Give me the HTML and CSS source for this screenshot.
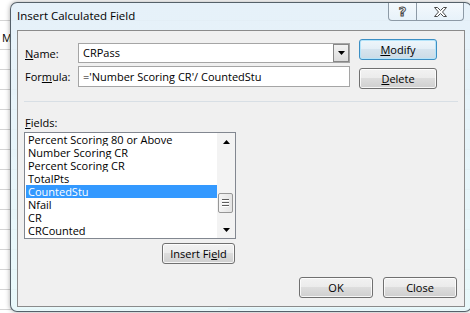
FILE: index.html
```html
<!DOCTYPE html>
<html>
<head>
<meta charset="utf-8">
<title>Insert Calculated Field</title>
<link rel="stylesheet" href="styles.css">
</head>
<body>
<div class="sheet">
  <div class="cell-m">M</div>
  <div class="sheet-blue"></div>
</div>
<div class="window">
  <div class="titlebar">
    <span class="title">Insert Calculated Field</span>
    <div class="caption-btns">
      <div class="cap help"><span class="help-glyph">?</span></div>
      <div class="cap close">
        <svg width="13" height="10" viewBox="0 0 13 10"><polygon points="0.5,0.5 3.5,0.5 6.5,3.5 9.5,0.5 12.5,0.5 8.5,5 12.5,9.5 9.5,9.5 6.5,6.5 3.5,9.5 0.5,9.5 4.5,5" fill="#fff" stroke="#4a4a4a" stroke-width="1" stroke-linejoin="miter"/></svg>
      </div>
    </div>
  </div>
  <div class="client">
    <div class="top">
      <div class="form">
        <div class="row">
          <label class="lbl"><u>N</u>ame:</label>
          <div class="combo"><span class="combo-text">CRPass</span><div class="drop"><svg width="7" height="4" viewBox="0 0 7 4"><polygon points="0,0 7,0 3.5,4" fill="#000"/></svg></div></div>
        </div>
        <div class="row">
          <label class="lbl">For<u>m</u>ula:</label>
          <div class="textbox">='Number Scoring CR'/ CountedStu</div>
        </div>
      </div>
      <div class="side">
        <button class="btn btn-default"><u>M</u>odify</button>
        <button class="btn"><u>D</u>elete</button>
      </div>
    </div>
    <div class="sep"></div>
    <div class="fields-label"><u>F</u>ields:</div>
    <div class="listbox">
      <ul class="items">
        <li>Percent Scoring 80 or Above</li>
        <li>Number Scoring CR</li>
        <li>Percent Scoring CR</li>
        <li>TotalPts</li>
        <li class="sel">CountedStu</li>
        <li>Nfail</li>
        <li>CR</li>
        <li>CRCounted</li>
      </ul>
      <div class="scrollbar">
        <div class="arrow"><svg width="7" height="4" viewBox="0 0 7 4"><polygon points="3.5,0 7,4 0,4" fill="#000"/></svg></div>
        <div class="track">
          <div class="thumb"><span></span><span></span><span></span></div>
        </div>
        <div class="arrow"><svg width="7" height="4" viewBox="0 0 7 4"><polygon points="0,0 7,0 3.5,4" fill="#000"/></svg></div>
      </div>
    </div>
    <div class="insert-row">
      <button class="btn btn-insert">Insert Fi<u>e</u>ld</button>
    </div>
    <div class="bottom">
      <button class="btn btn-bottom">OK</button>
      <button class="btn btn-bottom">Close</button>
    </div>
  </div>
</div>
</body>
</html>
```
FILE: styles.css
```css
* { box-sizing: border-box; }
html, body { margin: 0; padding: 0; }
body {
  width: 470px;
  height: 313px;
  overflow: hidden;
  position: relative;
  background: #fff;
  font-family: "Open Sans", "Noto Sans", sans-serif;
  font-size: 11px;
  color: #000;
}
.sheet {
  position: absolute;
  left: 0; top: 0; right: 0; bottom: 0;
  background:
    linear-gradient(#d4d4d4, #d4d4d4) 0 20px / 100% 1px no-repeat,
    repeating-linear-gradient(to bottom, transparent 0 9px, #d4d4d4 9px 10px, transparent 10px 20px) 0 40px / 100% 273px no-repeat;
}
.cell-m {
  position: absolute;
  left: 2px;
  top: 30px;
  line-height: 15px;
  font-size: 11px;
}
.sheet-blue {
  position: absolute;
  left: 228px;
  top: 308px;
  width: 172px;
  height: 2px;
  background: #b7cbe6;
}
.window {
  position: absolute;
  left: 10px;
  top: 2px;
  width: 462px;
  height: 310px;
  border: 1px solid rgba(60, 70, 80, 0.85);
  border-radius: 7px;
  background: linear-gradient(to bottom, rgba(228, 240, 249, 0.92), rgba(230, 248, 250, 0.9));
  box-shadow: 0 0 5px rgba(0, 0, 0, 0.35);
  display: flex;
  flex-direction: column;
}
.titlebar {
  height: 27px;
  display: flex;
  align-items: flex-start;
  padding-left: 6px;
}
.title {
  padding-top: 5px;
  line-height: 15px;
  font-size: 11.5px;
}
.caption-btns {
  margin-left: auto;
  margin-right: 7px;
  display: flex;
  height: 18px;
  border: 1px solid #8d9aa6;
  border-top: none;
  border-radius: 0 0 4px 4px;
  background: linear-gradient(rgba(255, 255, 255, 0.55), rgba(232, 242, 250, 0.6));
}
.cap {
  display: flex;
  align-items: center;
  justify-content: center;
}
.help {
  width: 28px;
  border-right: 1px solid #8d9aa6;
}
.help-glyph {
  font-family: "DejaVu Sans", sans-serif;
  font-weight: bold;
  font-size: 13px;
  line-height: 14px;
  color: #fff;
  -webkit-text-stroke: 1px #4a4a4a;
}
.close {
  width: 46px;
}
.client {
  margin: 0 6px;
  height: 277px;
  border: 1px solid #8b8b8b;
  background: #f0f0f0;
}
.top {
  display: flex;
  padding: 8px 0 0 7px;
}
.form {
  margin-top: 4px;
  display: flex;
  flex-direction: column;
  gap: 3px;
}
.row {
  display: flex;
  align-items: center;
}
.lbl {
  width: 53px;
  line-height: 15px;
}
.combo {
  width: 272px;
  height: 20px;
  border: 1px solid #a5a5a5;
  background: #fff;
  display: flex;
  padding-left: 4px;
  line-height: 18px;
}
.drop {
  margin-left: auto;
  width: 16px;
  height: 18px;
  border: 1px solid #878787;
  background: linear-gradient(#f2f2f2, #dcdcdc);
  display: flex;
  align-items: center;
  justify-content: center;
}
.textbox {
  width: 272px;
  height: 21px;
  border: 1px solid #a5a5a5;
  background: #fff;
  padding-left: 4px;
  line-height: 19px;
  white-space: nowrap;
}
.side {
  margin-left: 9px;
  display: flex;
  flex-direction: column;
  gap: 8px;
}
.btn {
  font: inherit;
  color: #000;
  height: 21px;
  padding: 0;
  line-height: 19px;
  text-align: center;
  border: 1px solid #707070;
  border-radius: 3px;
  background: linear-gradient(#f2f2f2 0%, #ebebeb 49%, #dddddd 50%, #cfcfcf 100%);
  box-shadow: inset 0 0 0 1px rgba(255, 255, 255, 0.8);
}
.side .btn {
  width: 78px;
}
.btn-default {
  border-color: #3c8fc4;
  box-shadow: inset 0 0 0 1px #b4e4fa;
  background: linear-gradient(#eef6fb 0%, #e3eef6 49%, #d6e4ee 50%, #cbdbe6 100%);
}
.sep {
  margin: 12px 6px 0 6px;
  border-top: 1px solid #d8dfe5;
}
.fields-label {
  padding-left: 7px;
  margin-top: 13px;
  line-height: 15px;
}
.listbox {
  margin: 2px 0 0 6px;
  width: 212px;
  height: 107px;
  border: 1px solid #828790;
  background: #fff;
  display: flex;
}
.items {
  list-style: none;
  margin: 0;
  padding: 0 0 0 1px;
  width: 192px;
}
.items li {
  height: 13px;
  line-height: 13px;
  padding-left: 2px;
  white-space: nowrap;
  overflow: hidden;
}
.items li.sel {
  background: #3399ff;
  color: #fff;
}
.scrollbar {
  width: 18px;
  background: #f3f3f3;
  display: flex;
  flex-direction: column;
}
.arrow {
  height: 17px;
  display: flex;
  align-items: center;
  justify-content: center;
}
.track {
  flex: 1;
}
.thumb {
  margin: 43px 0 0 1px;
  width: 15px;
  height: 20px;
  border: 1px solid #979797;
  border-radius: 2px;
  background: linear-gradient(to right, #f4f4f4, #e4e4e4);
  display: flex;
  flex-direction: column;
  align-items: center;
  justify-content: center;
  gap: 1px;
}
.thumb span {
  width: 7px;
  height: 2px;
  border-top: 1px solid #5c5c5c;
  border-bottom: 1px solid #ffffff;
}
.insert-row {
  width: 212px;
  margin: 4px 0 0 6px;
  padding-right: 1px;
  display: flex;
  justify-content: flex-end;
}
.btn-insert {
  width: 73px;
}
.bottom {
  display: flex;
  justify-content: flex-end;
  gap: 10px;
  padding-right: 7px;
  margin-top: 13px;
}
.btn-bottom {
  width: 74px;
}
```
